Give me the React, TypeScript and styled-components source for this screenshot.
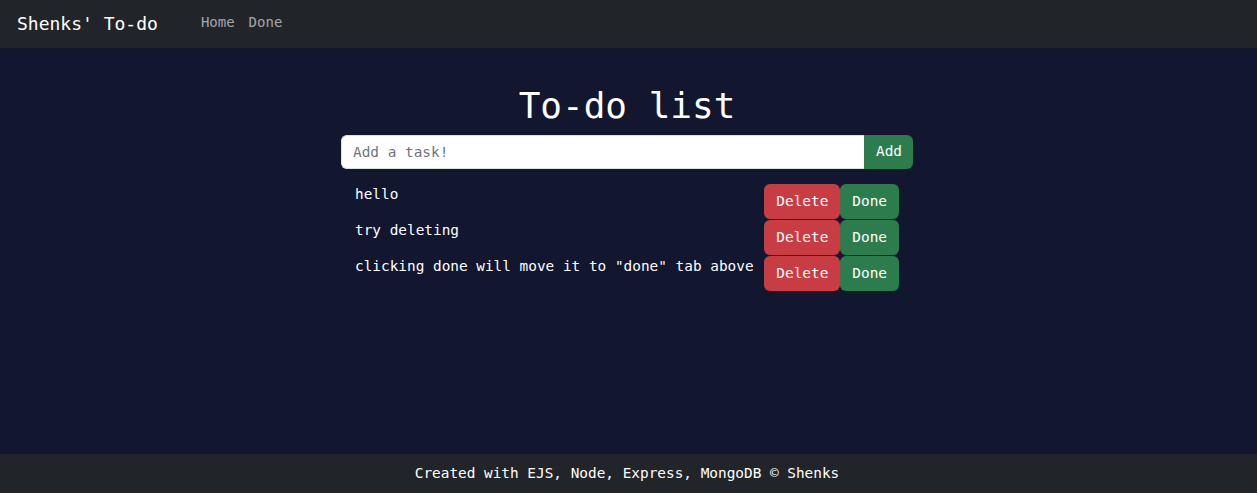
import React from "react";
import styled, { createGlobalStyle } from "styled-components";

const Global = createGlobalStyle`
  html, body { margin: 0; padding: 0; height: 100%; }
  body {
    background: #12162f;
    color: #fff;
    font-family: "DejaVu Sans Mono", "Liberation Mono", monospace;
    font-size: 14.4px;
    line-height: 1.5;
  }
  #root { min-height: 100vh; display: flex; flex-direction: column; }
  * { box-sizing: border-box; }
`;

const NavBar = styled.nav`
  height: 48px;
  background: #212529;
  display: flex;
  align-items: center;
  padding: 0 17px;
`;

const Brand = styled.a`
  color: #fff;
  font-size: 18px;
  text-decoration: none;
  margin-right: 43px;
  margin-top: -1px;
`;

const NavLinks = styled.div`
  display: flex;
  gap: 14px;
  margin-top: -4px;
`;

const NavLink = styled.a`
  color: rgba(255, 255, 255, 0.6);
  font-size: 14px;
  text-decoration: none;
`;

const Main = styled.main`
  flex: 1;
  padding-top: 36px;
`;

const Container = styled.div`
  width: 572px;
  margin: 0 auto 0 341px;
`;

const Title = styled.h1`
  margin: 0 0 8px;
  font-size: 36px;
  font-weight: 400;
  line-height: 1.2;
  text-align: center;
`;

const InputGroup = styled.form`
  display: flex;
  height: 34px;
  margin: 0 0 15px;
`;

const TaskInput = styled.input`
  flex: 1;
  border: 1px solid #dee2e6;
  border-right: none;
  border-radius: 6px 0 0 6px;
  padding: 0 11px;
  font-family: inherit;
  font-size: 14.4px;
  color: #212529;
  background: #fff;
  outline: none;
  &::placeholder { color: #6c757d; }
`;

const Button = styled.button<{ $variant: "danger" | "success"; $joined?: "left" | "right" }>`
  font-family: inherit;
  font-size: 14.4px;
  line-height: 1.5;
  color: #fff;
  border: none;
  padding: 6px 12px;
  height: 35px;
  border-radius: ${(p) =>
    p.$joined === "left" ? "0 6px 6px 0" : "6px"};
  background: ${(p) => (p.$variant === "danger" ? "#c83d43" : "#2d7c4e")};
  cursor: pointer;
`;

const AddButton = styled(Button)`
  height: 34px;
  padding: 0 12px;
  width: 49px;
`;

const List = styled.ul`
  list-style: none;
  margin: 0;
  padding: 0 14px;
`;

const Row = styled.li`
  display: flex;
  align-items: flex-start;
  height: 36px;
`;

const ItemText = styled.span`
  flex: 1;
  line-height: 21px;
`;

const Actions = styled.div`
  display: flex;
`;

const Footer = styled.footer`
  height: 39px;
  background: #212529;
  display: flex;
  align-items: center;
  justify-content: center;
  color: #fff;
  padding-right: 3px;
`;

const items = ["hello", "try deleting", 'clicking done will move it to "done" tab above'];

export default function App() {
  return (
    <>
      <Global />
      <NavBar>
        <Brand href="#">Shenks' To-do</Brand>
        <NavLinks>
          <NavLink href="#">Home</NavLink>
          <NavLink href="#">Done</NavLink>
        </NavLinks>
      </NavBar>
      <Main>
        <Container>
          <Title>To-do list</Title>
          <InputGroup onSubmit={(e) => e.preventDefault()}>
            <TaskInput placeholder="Add a task!" />
            <AddButton $variant="success" $joined="left">Add</AddButton>
          </InputGroup>
          <List>
            {items.map((t) => (
              <Row key={t}>
                <ItemText>{t}</ItemText>
                <Actions>
                  <Button $variant="danger">Delete</Button>
                  <Button $variant="success">Done</Button>
                </Actions>
              </Row>
            ))}
          </List>
        </Container>
      </Main>
      <Footer>Created with EJS, Node, Express, MongoDB © Shenks</Footer>
    </>
  );
}
